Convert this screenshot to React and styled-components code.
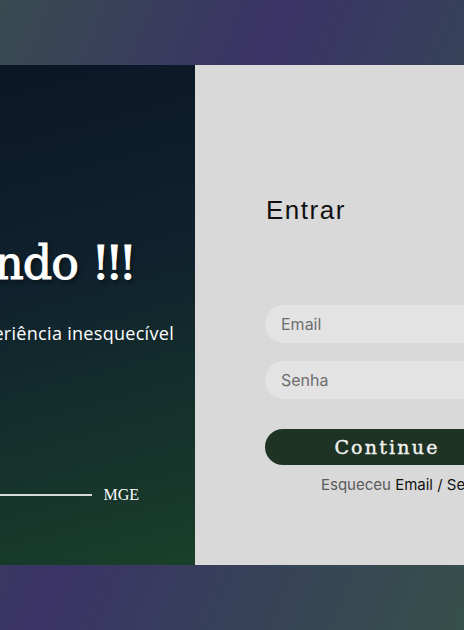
import styled, { createGlobalStyle } from "styled-components";

// Global reset
const GlobalStyle = createGlobalStyle`
  html, body {
    margin: 0;
    padding: 0;
  }
  body {
    font-family: "Inter", "Liberation Sans", sans-serif;
  }
`;

// Page background with the diagonal gradient
const Page = styled.div`
  width: 100%;
  height: 100vh;
  overflow: hidden;
  display: flex;
  justify-content: center;
  align-items: center;
  background: linear-gradient(
    112deg,
    #384b50 0%,
    #3b3366 40%,
    #37405b 64%,
    #36504a 100%
  );
`;

const Card = styled.div`
  flex-shrink: 0;
  width: 694px;
  height: 500px;
  margin-top: -1px;
  display: flex;
`;

// Left welcome panel
const Welcome = styled.div`
  width: 310px;
  flex-shrink: 0;
  box-sizing: border-box;
  padding-top: 168px;
  display: flex;
  flex-direction: column;
  align-items: flex-end;
  background: linear-gradient(165deg, #0a1526 0%, #10222d 45%, #193f2a 100%);
  color: #fff;
`;

const Title = styled.h1`
  margin: 0 63px 0 0;
  font-family: "DejaVu Serif", serif;
  font-size: 46px;
  font-weight: 400;
  line-height: 60px;
  letter-spacing: -1px;
  white-space: nowrap;
  -webkit-text-stroke: 1px #fff;
  text-shadow: 2px 3px 4px rgba(0, 0, 0, 0.55);
`;

const Bangs = styled.span`
  letter-spacing: -5px;
`;

const Subtitle = styled.p`
  margin: 28px 21px 0 0;
  font-family: "Open Sans", "Noto Sans", sans-serif;
  font-size: 18px;
  line-height: 24px;
  letter-spacing: 0.3px;
  white-space: nowrap;
`;

const Signature = styled.div`
  margin: 140px 56px 0 0;
  display: flex;
  align-items: center;
  gap: 11px;
`;

const Rule = styled.span`
  display: block;
  width: 200px;
  height: 2px;
  background: #d8d8d8;
`;

const Brand = styled.span`
  font-family: "Liberation Serif", serif;
  font-size: 16px;
  line-height: 20px;
`;

// Right login panel
const LoginPanel = styled.div`
  flex: 1;
  box-sizing: border-box;
  padding: 130px 70px 0;
  background: #d9d9d9;
  display: flex;
  flex-direction: column;
`;

const Heading = styled.h2`
  margin: 0 0 80px 1px;
  font-family: "Liberation Sans", sans-serif;
  font-size: 26px;
  font-weight: 400;
  line-height: 30px;
  letter-spacing: 1.5px;
  color: #111;
`;

const Field = styled.input`
  box-sizing: border-box;
  width: 100%;
  height: 38px;
  margin-bottom: ${(p) => p.$gap}px;
  padding: 0 16px;
  border: none;
  border-radius: 19px;
  outline: none;
  background: #e3e3e3;
  font-family: "Inter", sans-serif;
  font-size: 16px;
  color: #222;

  &::placeholder {
    color: #6e6e6e;
  }
`;

const Continue = styled.button`
  height: 36px;
  width: 100%;
  border: none;
  border-radius: 18px;
  background: #1e3323;
  color: #f2f2f2;
  font-family: "DejaVu Serif", serif;
  font-size: 19px;
  font-weight: 400;
  letter-spacing: 2.2px;
  -webkit-text-stroke: 0.4px #f2f2f2;
  cursor: pointer;
`;

const Forgot = styled.p`
  margin: 10px 0 0 56px;
  font-family: "Inter", sans-serif;
  font-size: 15px;
  line-height: 20px;
  white-space: nowrap;
  color: #5a5a5a;
`;

const ForgotLink = styled.span`
  color: #111;
`;

export default function App() {
  return (
    <>
      <GlobalStyle />
      <Page>
        <Card>
          <Welcome>
            <Title>
              Bem-vindo <Bangs>!!!</Bangs>
            </Title>
            <Subtitle>Uma experiência inesquecível</Subtitle>
            <Signature>
              <Rule />
              <Brand>MGE</Brand>
            </Signature>
          </Welcome>

          <LoginPanel>
            <Heading>Entrar</Heading>
            <Field type="email" placeholder="Email" $gap={18} />
            <Field type="password" placeholder="Senha" $gap={30} />
            <Continue type="button">Continue</Continue>
            <Forgot>
              Esqueceu <ForgotLink>Email / Senha?</ForgotLink>
            </Forgot>
          </LoginPanel>
        </Card>
      </Page>
    </>
  );
}
